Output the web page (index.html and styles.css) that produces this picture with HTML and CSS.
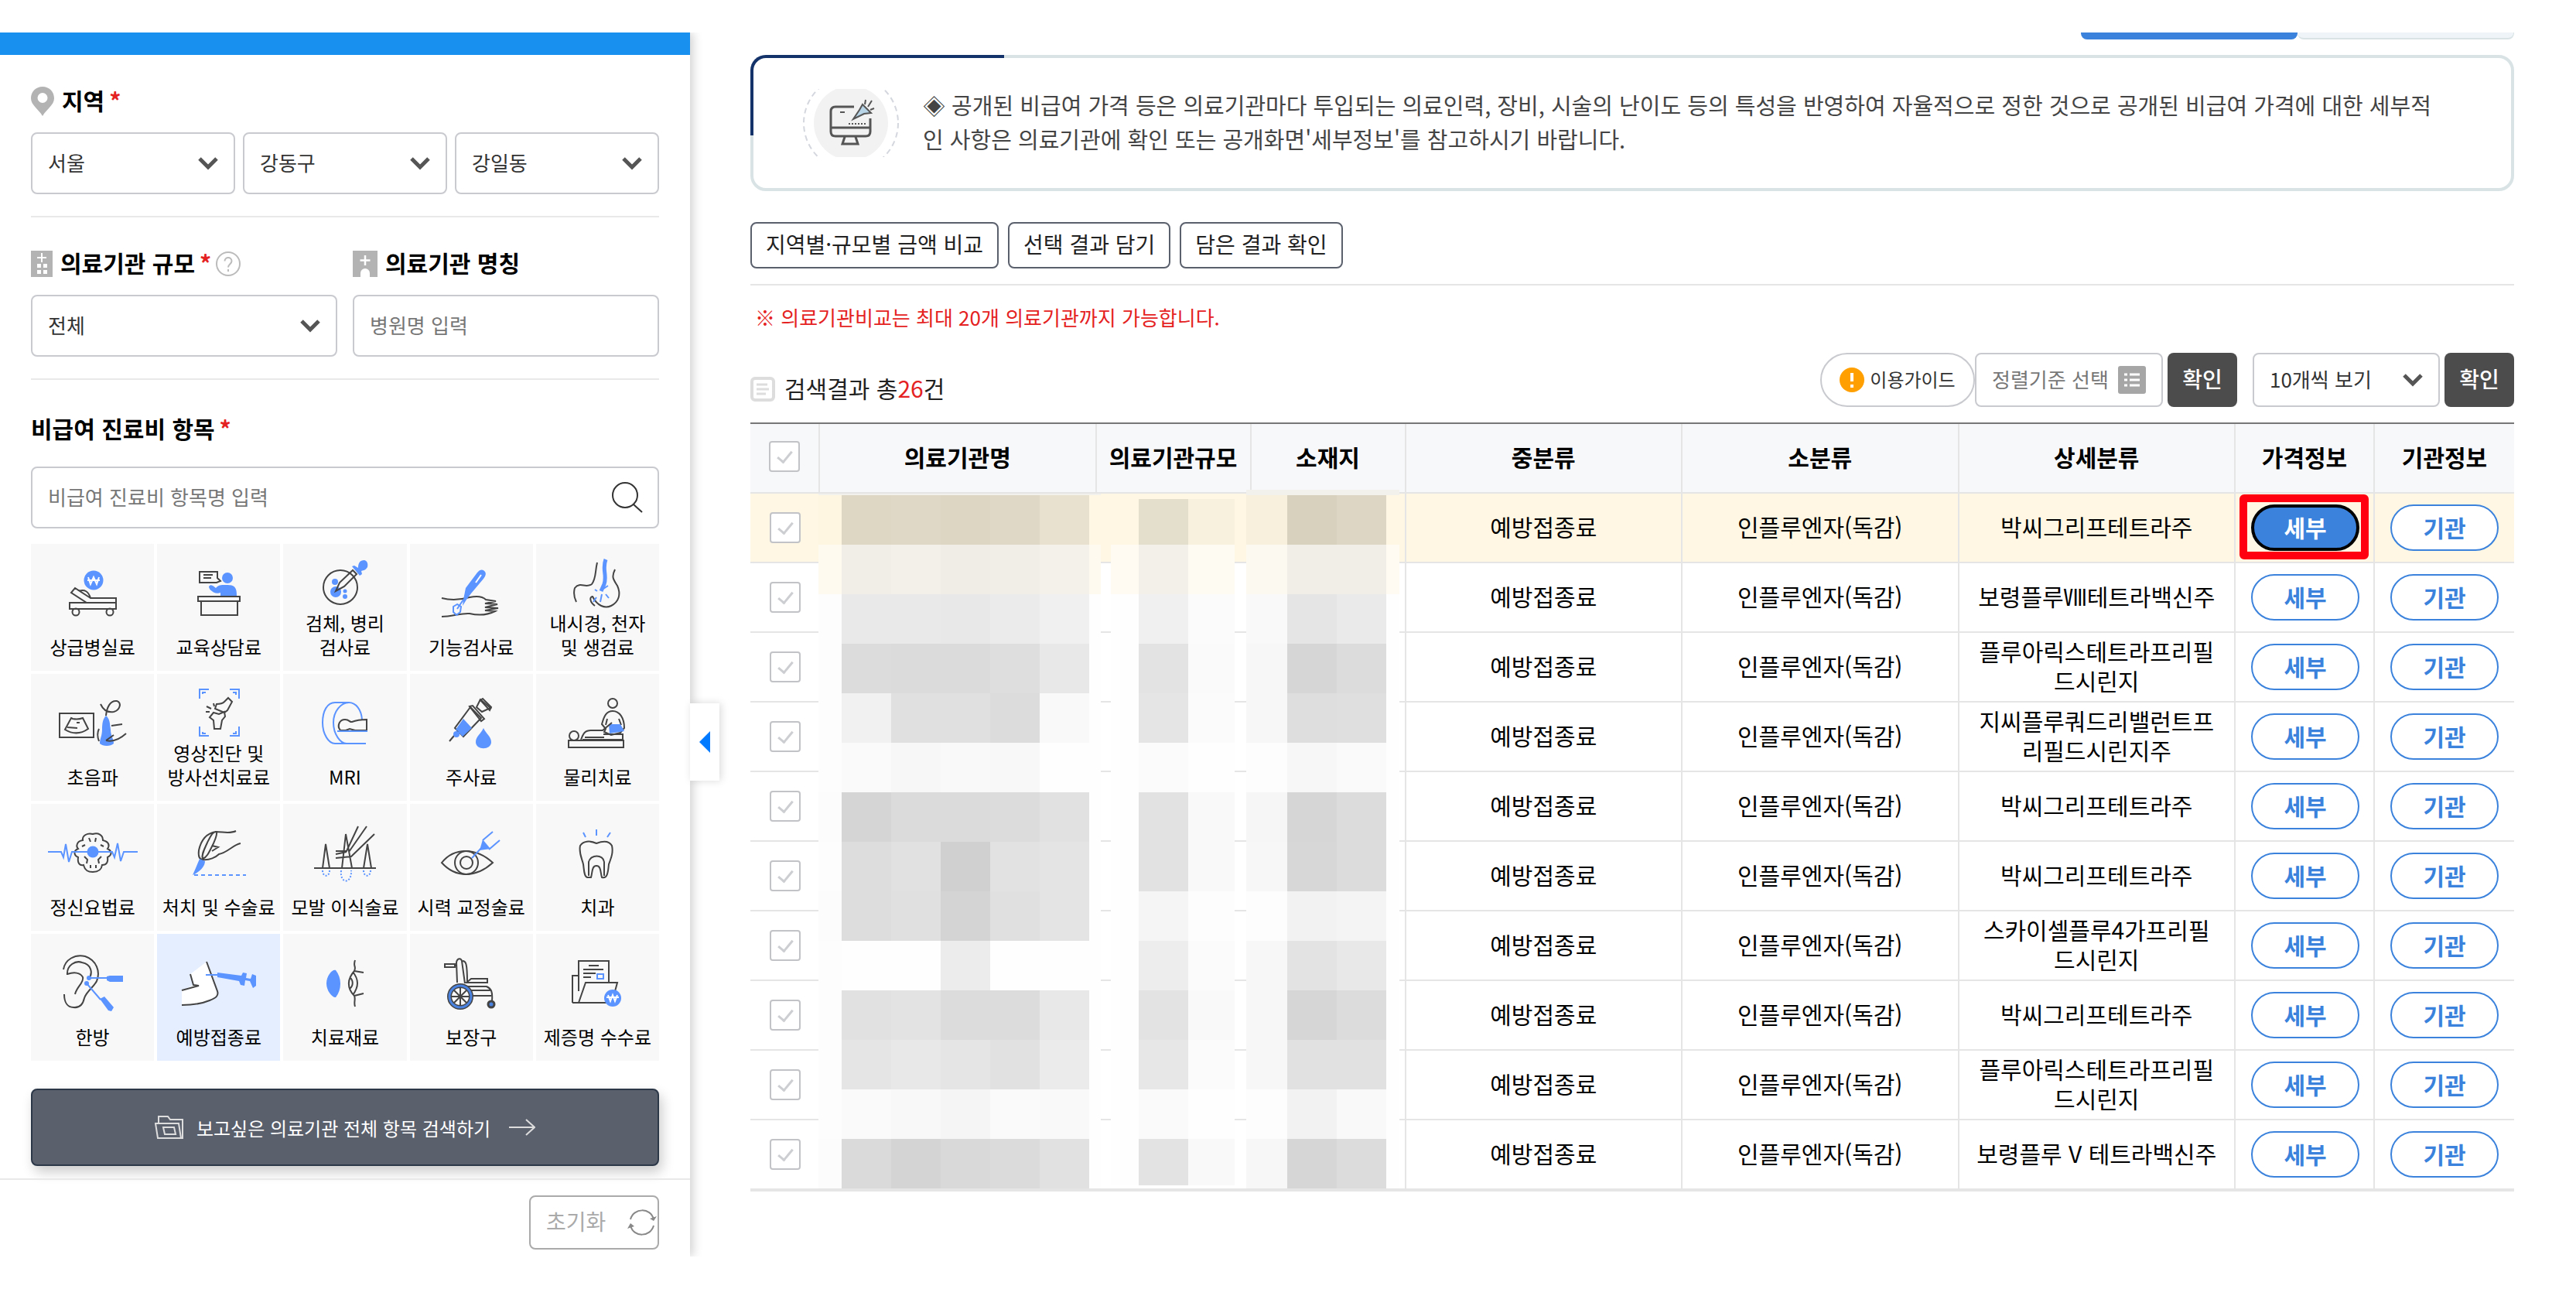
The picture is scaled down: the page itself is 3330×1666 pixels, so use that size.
FILE: index.html
```html
<!DOCTYPE html>
<html lang="ko">
<head>
  <meta charset="UTF-8">
  <title>비급여 진료비 정보</title>
  <link rel="stylesheet" href="styles.css">
</head>
<body>
<div class="page">

  <aside class="sidebar">
    <div class="sidebar-bar"></div>
    <form class="search">

      <section class="section line">
        <div class="label">
          <svg width="30" height="38" viewBox="0 0 30 38"><path d="M15 0C6.500 0 0 6.500 0 15c0 9 10 14 15 23 5-9 15-14 15-23C30 6.500 23.500 0 15 0zm0 8a6.500 6.500 0 1 1 0 13 6.500 6.500 0 0 1 0-13z" fill="#b3b3b3"/></svg>
          <label for="sido">지역</label><em>*</em>
        </div>
        <div class="fields three">
          <span class="select-box">
            <select id="sido"><option>서울</option></select>
            <svg class="chevron" viewBox="0 0 28 18"><path d="M3 3l11 11L25 3"/></svg>
          </span>
          <span class="select-box">
            <select aria-label="시군구"><option>강동구</option></select>
            <svg class="chevron" viewBox="0 0 28 18"><path d="M3 3l11 11L25 3"/></svg>
          </span>
          <span class="select-box">
            <select aria-label="읍면동"><option>강일동</option></select>
            <svg class="chevron" viewBox="0 0 28 18"><path d="M3 3l11 11L25 3"/></svg>
          </span>
        </div>
      </section>

      <section class="section line two">
        <div>
          <div class="label">
            <svg width="28" height="34" viewBox="0 0 28 34"><path d="M0 0h28v34H0z" fill="#b3b3b3"/><path d="M14 3v12M8 9h12" stroke="#fff" stroke-width="2"/><path d="M8 17h5v5H8zM16 17h5v5h-5zM8 25h5v5H8zM16 25h5v5h-5z" fill="#fff"/></svg>
            <label for="size">의료기관 규모</label><em>*</em>
            <svg width="32" height="32" viewBox="0 0 32 32" fill="none" stroke="#bbb" stroke-width="2"><circle cx="16" cy="16" r="15"/><path d="M11.500 12.500c0-6 9-6 9 0 0 3.500-4.500 4-4.500 8M16 23v3"/></svg>
          </div>
          <span class="select-box">
            <select id="size"><option>전체</option></select>
            <svg class="chevron" viewBox="0 0 28 18"><path d="M3 3l11 11L25 3"/></svg>
          </span>
        </div>
        <div>
          <div class="label">
            <svg width="32" height="34" viewBox="0 0 32 34"><path d="M0 0h32v34H22v-5a6 6 0 0 0-12 0v5H0z" fill="#b3b3b3"/><path d="M16 6v13M9.500 12.500h13" stroke="#fff" stroke-width="2.500"/></svg>
            <label for="name">의료기관 명칭</label>
          </div>
          <input class="text" id="name" type="text" placeholder="병원명 입력">
        </div>
      </section>

      <section class="section items">
        <div class="label"><label for="item">비급여 진료비 항목</label><em>*</em></div>
        <div class="select-box">
          <input class="text" id="item" type="text" placeholder="비급여 진료비 항목명 입력">
          <svg class="magnifier" viewBox="0 0 40 40"><circle cx="17" cy="17" r="16"/><path d="M28 29l11 10"/></svg>
        </div>

        <div class="tiles">
          <button type="button">
            <svg viewBox="0 0 160 84"><circle class="f" cx="81" cy="47" r="12.500"/><path class="w" d="M74 43l3 9 4-9 4 9 3-9M73 47h16"/><path class="s" d="M62 61q11-4 15 9h33v6H72L52 63l5-6 20 13M50 76h60v8H50z"/><circle class="s" cx="58" cy="88" r="4.500"/><circle class="s" cx="102" cy="88" r="4.500"/></svg>
            <span>상급병실료</span>
          </button>
          <button type="button">
            <svg viewBox="0 0 160 84"><path class="s" d="M55 36h23v8l4 4-5 2H55zM60 40h12M60 44h10"/><circle class="f" cx="91" cy="44" r="7"/><path class="f" d="M82 67V63c-6 3-15-3-15-8 3-4 6 0 9 2 3-4 7-4 12-4 11 0 15 1 15 14z"/><path class="s" d="M53 68h54v6H53zM57 74h47v18H57z"/></svg>
            <span>교육상담료</span>
          </button>
          <button type="button">
            <svg viewBox="0 0 160 84"><circle class="s" cx="74" cy="56" r="22"/><circle class="f" cx="67" cy="49" r="4"/><circle class="f" cx="68" cy="62" r="7"/><circle class="f" cx="80" cy="61" r="2.500"/><circle class="f" cx="80" cy="68" r="3"/><path class="s" d="M68 61l5-11 17-16 5 5-16 16z"/><path class="f" d="M89 29l3-1 5 3c0-6 2-10 8-10 4 1 5 5 4 9-3 5-6 4-8 5l1 4-3 2z"/></svg>
            <span>검체, 병리<br>검사료</span>
          </button>
          <button type="button">
            <svg viewBox="0 0 160 84"><path class="s" d="M42 70c12 3 25 2 36-1 10-2 17-1 21 3l13 2-14 3 16 1-16 4 17 1-17 3 13 1c-10 5-20 6-33 3-10-1-23 4-36 4"/><path class="f" d="M70 72l3-15 15-20c4-5 8-4 10-1 2 3 0 6-2 9L80 64l-6 8-5 8z"/><path class="w" d="M86 50l7-10"/><path class="b" d="M70 72l-8 12M62 78l-5 3v7l4 4 5-4 1-7z"/></svg>
            <span>기능검사료</span>
          </button>
          <button type="button">
            <svg viewBox="0 0 160 84"><path class="s" d="M80 24c-3 12-1 20-7 28-8 6-15-4-22 5-2 7-1 12 2 18M103 33c-5 10-2 13 3 21 5 11 2 21-8 26-8 4-18 0-24-12-4 0-4 7 3 12"/><path class="b thick" d="M91 20c-5 13 2 20-2 32l-4 9"/><path class="b" d="M80 61l-3-2M86 65l-2 10M79 69l-4 6M91 65l4 5M88 58l6-4"/></svg>
            <span>내시경, 천자<br>및 생검료</span>
          </button>

          <button type="button">
            <svg viewBox="0 0 160 84"><path class="s" d="M37 51h44v31H37zM52 57l2 1c5 1 8 1 13-1l7 14c-10 7-20 7-30 1zM47 69l13 1M59 63h4"/><path class="f" d="M97 54c5 4 5 10 6 18 0 8 4 12 4 18-4 4-14 4-18 0 0-6 3-10 3-18 0-8 1-14 5-18z"/><path class="s" d="M97 54c1-10 5-20 14-19 7 2 4 12-4 14-6 1-13-1-17-10M104 67l14-2M88 71c-3 6-2 11 0 16M97 86c8 2 16 0 26-9M97 86l10-7"/></svg>
            <span>초음파</span>
          </button>
          <button type="button">
            <svg viewBox="0 0 160 84"><path class="b" d="M55 32V20h12M59 26v-2h4M94 20h12v12M98 24h4v3M55 68v12h12M59 75v2h4M94 80h12V68M98 77h4v-3"/><path class="s" d="M92 31l5 5-6 11-4 3-12-5 2-6c5 0 8-1 10-3zM73 50l7 2 7-3 1 6-4 5-2 11h-8l-1-11-5-4zM64 42l6 3M73 38l1 4M63 49l5 0"/></svg>
            <span>영상진단 및<br>방사선치료료</span>
          </button>
          <button type="button">
            <svg viewBox="0 0 160 84"><path class="b" d="M102 59c-1-13-8-22-17-22H67C57 37 51 48 51 63s8 27 16 27h40M85 37C75 37 65 48 65 63s9 27 17 27"/><path class="s" d="M74 73c-5-6-1-14 6-14 6 0 6 4 9 3 5-2 10-3 19-3v14H93l-7-2-5 2z"/><path class="b" d="M70 74h39"/></svg>
            <span>MRI</span>
          </button>
          <button type="button">
            <svg viewBox="0 0 160 84"><path class="s" d="M92 33l-5 10 7 6 11-5zM79 43l14 14-23 24-11-11z"/><path class="f" d="M70 58l11 12-12 11-9-9z"/><path class="s" d="M78 42l4-1 15 17-4 3zM92 34l3-2 11 11-2 4zM63 74l-11 13"/><circle class="f" cx="61" cy="78" r="4"/><path class="f" d="M96 70c3 7 10 11 10 18 0 11-20 11-20 0 0-7 7-11 10-18z"/></svg>
            <span>주사료</span>
          </button>
          <button type="button">
            <svg viewBox="0 0 160 84"><circle class="s" cx="100" cy="38" r="6"/><path class="s" d="M100 48c-8 0-11 6-14 17l5 6-2 4 9 4 12-3 5-6c0-13-6-22-15-22zM93 58l-2 8M108 58l3 8"/><path class="f" d="M95 65h15l5 9-19 3z"/><circle class="s" cx="50" cy="80" r="6"/><path class="s" d="M59 85c3-8 5-12 13-12h15l12-10M88 78h25v7H61M43 86h71v9H43zM64 82h25"/></svg>
            <span>물리치료</span>
          </button>

          <button type="button">
            <svg viewBox="0 0 160 84"><path class="s" d="M80 39c-7-2-14 2-13 8-8 1-9 8-6 11-7 3-5 9 0 11-1 8 2 11 7 10 2 8 7 9 12 9s11-1 12-9c6 0 8-4 7-10 6-3 6-8 0-11 3-4 2-9-6-11 0-7-6-10-13-8zM75 44l2 5M84 44l-1 5M70 53l-4 2M90 53l4 2M69 68l4 4-1 5M91 68l-4 4 1 5M77 79v4M84 79v4"/><path class="b" d="M22 62h17l3 7 3-17 4 23 4-13h52l3 7 4-18 4 23 4-12h18"/><circle class="f" cx="80" cy="62" r="7.500"/></svg>
            <span>정신요법료</span>
          </button>
          <button type="button">
            <svg viewBox="0 0 160 84"><path class="s" d="M102 35c-8 4-17 1-26 1-12 2-19 10-22 24-1 8 1 12 5 12 9 1 17-3 21-7 11-2 18-12 28-14M77 36c-5-1-8 6-12 14-4 9-8 16-6 21 6-2 9-10 14-20 3-7 5-11 4-15zM71 54l8 2-8 5"/><path class="f" d="M55 71l7 3c0 7-7 14-16 18l4-9z"/><path class="b" stroke-dasharray="5 4" d="M48 92h67"/></svg>
            <span>처치 및 수술료</span>
          </button>
          <button type="button">
            <svg viewBox="0 0 160 84"><path class="s" d="M51 83l4-31 5 31M76 83l5-44 8 44M104 83l5-31 5 31M97 29L82 61l-14 0M108 29L85 62M118 39L88 68l-20 2M68 65l14-3"/><path class="s" d="M40 83h80"/><path class="b" stroke-dasharray="2 2" d="M51 86c0 9 9 9 9 0M75 86c-2 18 14 18 13 0M104 86c0 9 9 9 9 0"/></svg>
            <span>모발 이식술료</span>
          </button>
          <button type="button">
            <svg viewBox="0 0 160 84"><path class="s" d="M42 76c16-20 44-20 66 0-22 20-48 20-66 0z"/><circle class="s" cx="74" cy="76" r="15"/><circle class="s" cx="74" cy="76" r="8"/><path class="b" d="M81 70l15-16M95 47l13-11M103 59l14-12"/><path class="f" d="M95 46l10 12-14 2z"/></svg>
            <span>시력 교정술료</span>
          </button>
          <button type="button">
            <svg viewBox="0 0 160 84"><path class="s" d="M79 51c-9-4-17-3-21 3-2 9 2 16 4 24 1 7 1 16 5 17h5c2-7 1-15 7-15s5 8 7 15c7 2 8-6 9-17 3-8 6-15 4-24-4-7-12-6-20-3zM69 93V75c2-10 19-10 20 0v18"/><path class="b" d="M62 37l3 6M79 33v8M97 37l-4 6"/></svg>
            <span>치과</span>
          </button>

          <button type="button">
            <svg viewBox="0 0 160 84"><path class="s" d="M42 46c2-13 15-20 28-17 15 5 20 20 15 32-4 8-13 13-16 22-2 9-6 13-14 12-8 0-12-7-12-17M47 53c-1-13 11-19 19-16 12 2 15 14 8 22M47 52c9-3 17-2 20 4 2 7-8 12-10 22"/><circle class="f" cx="75" cy="57" r="3"/><circle class="f" cx="72" cy="64" r="3"/><path class="b" d="M75 57h24M72 64l18 21"/><path class="f" d="M98 55l4-1h17v8h-17l-4-2zM89 84l6-3 12 14-3 5-4-1z"/></svg>
            <span>한방</span>
          </button>
          <button type="button" class="on">
            <svg viewBox="0 0 160 84"><path fill="#fff" d="M64 36L43 52l5 14-16 7v19c18 0 34-4 46-13z"/><path class="s" d="M64 36l14 38c2 6-2 9-10 12-12 5-22 6-36 6M43 52l4 14 7 1-22 6"/><path class="b" d="M63 53h18"/><path class="f" d="M78 50l31 4 2-4 5 1-1 6 6 1 2-6 5 2v13l-4 3-4-9-6-1-1 7-5-1-2-5-28-5z"/></svg>
            <span>예방접종료</span>
          </button>
          <button type="button">
            <svg viewBox="0 0 160 84"><path class="f" d="M68 47c8 10 8 25 0 35-4 1-12-8-12-18s8-19 12-17z"/><path class="s" d="M93 34c-3 8 2 8-1 14-9 10-10 22 0 32 2 5-1 8 1 14M90 49c8 10 8 19 0 30M86 56c5 4 5 11 0 15M92 48l12 2M92 80l12-3"/></svg>
            <span>치료재료</span>
          </button>
          <button type="button">
            <svg viewBox="0 0 160 84"><path class="s" d="M62 63l-1-26c1-6 6-6 7-2l4 29M69 35c4 0 6 2 6 28M46 39h13v4H46zM59 41h3M74 63h27v-5H80zM74 68h26c6 3 8 6 7 19M80 73h25M82 80h24"/><circle cx="66" cy="81" r="14" fill="#f8f8f8" stroke="#444" stroke-width="6"/><circle cx="66" cy="81" r="14" fill="none" stroke="#4a82e0" stroke-width="3"/><path class="s" d="M66 69v24M54 81h24M58 73l16 16M74 73L58 89"/><circle cx="106" cy="91" r="4" fill="#4a82e0" stroke="#444" stroke-width="3"/></svg>
            <span>보장구</span>
          </button>
          <button type="button">
            <svg viewBox="0 0 160 84"><path class="s" d="M48 89V54h8V35h39v27M56 54v20M69 41h13M62 46h26M62 51h16M62 56h10M56 89l9-26h41l-7 26H48z"/><path class="b" d="M80 52h8v6h-8z"/><circle class="f" cx="100" cy="83" r="11"/><path class="w" d="M94 79l3 8 3-8 3 8 3-8M92 82h16"/></svg>
            <span>제증명 수수료</span>
          </button>
        </div>

        <button type="button" class="full-search">
          <svg width="38" height="30" viewBox="0 0 38 30"><path d="M5 10V1h12l3 4h16v24H4L1 10h30l3 19M11 15h14l2 9H13z"/></svg>
          <span>보고싶은 의료기관 전체 항목 검색하기</span>
          <svg width="34" height="22" viewBox="0 0 34 22"><path d="M0 11h33M22 1l11 10-11 10"/></svg>
        </button>
      </section>

      <div class="sidebar-foot">
        <button type="reset" class="reset"><span>초기화</span>
          <svg width="38" height="34" viewBox="0 0 38 34"><path d="M4 13C8-2 30-3 34 13M34 21C30 36 8 37 4 21"/><path d="M29 12l5 3 4-6zM9 22l-5-4-4 7z" fill="#888" stroke="none"/></svg>
        </button>
      </div>
    </form>
    <button type="button" class="fold" aria-label="접기"><svg width="14" height="28" viewBox="0 0 14 28"><path d="M14 0v28L0 14z" fill="#007bff"/></svg></button>
  </aside>

  <main class="content">
    <div class="tabs"><span class="on"></span><span></span></div>

    <div class="notice">
      <svg width="124" height="88" viewBox="0 0 124 88" fill="none">
        <circle cx="62" cy="44" r="48" fill="#f2f2f2"/>
        <circle cx="62" cy="44" r="61" stroke="#d5d7df" stroke-width="2" stroke-dasharray="7 5"/>
        <g stroke="#555" stroke-width="3"><path d="M66 23H42q-6 0-6 6v26q0 6 6 6h39q6 0 6-6V38M36 50h51M54 62l-3 9h20l-3-9"/><path stroke-width="2" stroke-dasharray="2 2" d="M59 45h22"/><path stroke-width="2" d="M77 20l11 11-9 1-14 7 8-12z" fill="#b7d3e6"/><path stroke-width="2" d="M48 30h6M80 20l1-6M84 23l5-8M87 27l5-2"/></g>
      </svg>
      <p>◈ 공개된 비급여 가격 등은 의료기관마다 투입되는 의료인력, 장비, 시술의 난이도 등의 특성을 반영하여 자율적으로 정한 것으로 공개된 비급여 가격에 대한 세부적인 사항은 의료기관에 확인 또는 공개화면'세부정보'를 참고하시기 바랍니다.</p>
    </div>

    <div class="actions">
      <button type="button">지역별·규모별 금액 비교</button>
      <button type="button">선택 결과 담기</button>
      <button type="button">담은 결과 확인</button>
    </div>
    <p class="warn">※ 의료기관비교는 최대 20개 의료기관까지 가능합니다.</p>

    <div class="toolbar">
      <p class="count">
        <svg width="32" height="32" viewBox="0 0 32 32" fill="none" stroke="#ddd" stroke-width="4"><rect x="2" y="2" width="28" height="28" rx="4"/><path d="M8 10h14M8 16h16M8 22h12" stroke-width="3"/></svg>
        <span>검색결과 총<b>26</b>건</span>
      </p>
      <button type="button" class="guide">
        <svg width="32" height="32" viewBox="0 0 32 32"><circle cx="16" cy="16" r="16" fill="#ffa000"/><path d="M16 7v11M16 22v4" stroke="#fff" stroke-width="4"/></svg><span>이용가이드</span>
      </button>
      <button type="button" class="sort"><span>정렬기준 선택</span>
        <svg width="36" height="36" viewBox="0 0 36 36"><rect width="36" height="36" rx="3" fill="#a6a6a6"/><path d="M8 11h4M15 11h13M8 18h4M15 18h13M8 25h4M15 25h13" stroke="#fff" stroke-width="3"/></svg>
      </button>
      <button type="button" class="ok">확인</button>
      <span class="select-box per-page">
        <select aria-label="목록 개수"><option>10개씩 보기</option></select>
        <svg class="chevron" viewBox="0 0 28 18"><path d="M3 3l11 11L25 3"/></svg>
      </span>
      <button type="button" class="ok">확인</button>
    </div>

    <div class="result">
      <table>
        <colgroup>
          <col class="c-check"><col class="c-wide"><col class="c-mid"><col class="c-mid">
          <col class="c-wide"><col class="c-wide"><col class="c-wide"><col class="c-btn"><col class="c-btn">
        </colgroup>
        <thead>
          <tr>
            <th><input type="checkbox" aria-label="전체 선택"></th>
            <th>의료기관명</th>
            <th>의료기관규모</th>
            <th>소재지</th>
            <th>중분류</th>
            <th>소분류</th>
            <th>상세분류</th>
            <th>가격정보</th>
            <th>기관정보</th>
          </tr>
        </thead>
        <tbody id="rows"></tbody>
      </table>
      <svg class="mask" id="mask" viewBox="0 0 2280 994" preserveAspectRatio="none" shape-rendering="crispEdges"></svg>
    </div>
  </main>

</div>
<script src="script.js"></script>
</body>
</html>
```
FILE: styles.css
```css
*, *::before, *::after {
  box-sizing: border-box;
}
body {
  margin: 0;
  background: #fff;
  color: #000;
  font-family: "Noto Sans CJK KR", "Noto Sans", sans-serif;
  font-size: 26px;
}
p {
  margin: 0;
}
button, input, select {
  margin: 0;
  font: inherit;
  color: inherit;
}
button {
  padding: 0;
  border: 0;
  background: none;
  cursor: pointer;
}
svg {
  flex: none;
}
.page {
  display: flex;
  align-items: flex-start;
  padding-top: 42px;
}

/* sidebar */
.sidebar {
  position: relative;
  flex: none;
  width: 892px;
  background: #fff;
  box-shadow: 4px 0 12px rgba(0,0,0,0.18);
  clip-path: inset(0 -60px 0 0);
}
.sidebar-bar {
  height: 29px;
  background: #1890f0;
}
.section {
  margin: 0 40px;
  padding: 40px 0 28px;
}
.section.line {
  border-bottom: 2px solid #e9e9e9;
}
.section.items {
  padding: 44px 0 16px;
}
.two {
  display: grid;
  grid-template-columns: 1fr 1fr;
  gap: 20px;
}
.label {
  display: flex;
  align-items: center;
  gap: 10px;
  height: 40px;
  margin-bottom: 20px;
  font-size: 30px;
  font-weight: bold;
  line-height: 40px;
}
.items .label {
  margin-bottom: 28px;
}
.label label, .label em {
  padding-bottom: 4px;
}
.label em {
  margin: 0 -4px;
  color: #e52222;
  font-style: normal;
}
.fields {
  display: flex;
  gap: 10px;
}
.select-box {
  position: relative;
  display: block;
  flex: 1;
}
select, .text {
  display: block;
  width: 100%;
  height: 80px;
  padding: 0 20px 4px;
  border: 2px solid #c9cacf;
  border-radius: 8px;
  background: #fff;
  color: #333;
  appearance: none;
}
.text::placeholder {
  color: #777;
}
.chevron {
  position: absolute;
  right: 21px;
  top: 50%;
  width: 28px;
  height: 18px;
  margin-top: -9px;
  fill: none;
  stroke: #555;
  stroke-width: 5;
  pointer-events: none;
}
.magnifier {
  position: absolute;
  right: 21px;
  top: 20px;
  width: 40px;
  height: 40px;
  fill: none;
  stroke: #333;
  stroke-width: 2;
}

.tiles {
  display: grid;
  grid-template-columns: repeat(5, minmax(0, 1fr));
  gap: 4px;
  margin-top: 20px;
}
.tiles button {
  display: flex;
  flex-direction: column;
  align-items: center;
  justify-content: space-between;
  height: 164px;
  padding-bottom: 16px;
  background: #f8f8f8;
  font-size: 24px;
  line-height: 31px;
  white-space: nowrap;
}
.tiles .on {
  background: #e5eeff;
}
.tiles svg {
  width: 160px;
  height: 84px;
  overflow: visible;
}
.s {
  fill: none;
  stroke: #444;
  stroke-width: 2;
}
.b {
  fill: none;
  stroke: #5b93ff;
  stroke-width: 2;
}
.thick {
  stroke-width: 5;
}
.f {
  fill: #5b93ff;
}
.w {
  fill: none;
  stroke: #fff;
  stroke-width: 2;
}

.full-search {
  display: flex;
  align-items: center;
  justify-content: center;
  width: 100%;
  height: 100px;
  margin-top: 36px;
  border: 2px solid #2c3748;
  border-radius: 8px;
  background: #5b606d;
  box-shadow: 4px 8px 16px rgba(0,0,0,0.2);
  color: #fff;
  font-size: 24px;
}
.full-search span {
  margin: 0 24px 0 16px;
}
.full-search svg {
  fill: none;
  stroke: #ddd;
  stroke-width: 2;
}
.sidebar-foot {
  display: flex;
  justify-content: flex-end;
  padding: 20px 40px 9px;
  border-top: 2px solid #e9e9e9;
}
.reset {
  display: flex;
  align-items: center;
  justify-content: space-between;
  width: 168px;
  height: 70px;
  padding: 0 1px 0 20px;
  border: 2px solid #aaa;
  border-radius: 8px;
  color: #aaa;
  font-size: 28px;
}
.reset span {
  padding-bottom: 4px;
}
.reset svg {
  fill: none;
  stroke: #888;
  stroke-width: 2;
}
.fold {
  position: absolute;
  left: 100%;
  top: 867px;
  display: flex;
  align-items: center;
  justify-content: center;
  width: 38px;
  height: 100px;
  background: #fff;
  box-shadow: 2px 0 10px rgba(0,0,0,0.15);
}

/* content */
.content {
  flex: 1;
  min-width: 0;
  padding: 0 80px 0 78px;
}
.tabs {
  display: flex;
  justify-content: flex-end;
  height: 9px;
  margin-bottom: 20px;
}
.tabs span {
  width: 280px;
  border: 2px solid #d9e3e6;
  border-width: 0 1px 2px 0;
  border-radius: 0 0 8px 8px;
  background: #eff4f8;
}
.tabs .on {
  border: 0;
  background: #3a82dc;
}
.notice {
  position: relative;
  display: flex;
  align-items: center;
  gap: 31px;
  height: 176px;
  padding: 0 90px 0 64px;
  border: 4px solid #d9e3e6;
  border-radius: 20px;
}
.notice::before {
  content: "";
  position: absolute;
  left: -4px;
  top: -4px;
  width: 328px;
  height: 104px;
  border: solid #14336a;
  border-width: 4px 0 0 4px;
  border-radius: 20px 0 0 0;
}
.notice p {
  padding-bottom: 4px;
  color: #444;
  font-size: 29px;
  line-height: 44px;
  word-break: break-all;
}
.actions {
  display: flex;
  gap: 12px;
  margin-top: 40px;
  padding-bottom: 20px;
  border-bottom: 2px solid #e5e5e5;
}
.actions button {
  height: 60px;
  padding: 0 18px 4px;
  border: 2px solid #5b606d;
  border-radius: 8px;
  color: #222;
  font-size: 28px;
}
.warn {
  margin: 20px 0 26px 6px;
  color: #e52222;
  line-height: 41px;
}
.toolbar {
  display: flex;
  height: 70px;
  margin-bottom: 20px;
}
.count {
  display: flex;
  align-items: center;
  align-self: flex-end;
  gap: 12px;
  height: 46px;
  margin-right: auto;
  color: #222;
  font-size: 30px;
}
.count span {
  padding-bottom: 4px;
}
.count b {
  color: #e52222;
  font-weight: normal;
}
.guide {
  display: flex;
  align-items: center;
  justify-content: center;
  gap: 7px;
  width: 200px;
  border: 2px solid #c9cacf;
  border-radius: 35px;
  color: #333;
  font-size: 24px;
}
.sort {
  display: flex;
  align-items: center;
  justify-content: space-between;
  width: 243px;
  padding: 0 20px;
  border: 2px solid #c9cacf;
  border-radius: 8px;
  color: #777;
}
.guide span, .sort span {
  padding-bottom: 4px;
}
.ok {
  width: 90px;
  margin-left: 6px;
  padding-bottom: 4px;
  border-radius: 8px;
  background: #4c4c4c;
  color: #fff;
  font-size: 28px;
  font-weight: 500;
}
.per-page {
  flex: none;
  width: 242px;
  margin-left: 20px;
}
.per-page select {
  height: 70px;
}

/* result table */
.result {
  position: relative;
}
table {
  width: 100%;
  border-top: 2px solid #777;
  border-bottom: 2px solid #e5e5e5;
  border-spacing: 0;
  table-layout: fixed;
  font-size: 30px;
  line-height: 38px;
}
.c-check { width: 90px; }
.c-mid { width: 200px; }
.c-btn { width: 180px; }
th, td {
  height: 90px;
  padding: 0 20px 4px;
  border-right: 2px solid #e5e5e5;
  border-bottom: 2px solid #e5e5e5;
  text-align: center;
  vertical-align: middle;
  word-break: break-all;
}
th:last-child, td:last-child {
  border-right: 0;
}
th {
  background: #f7f8fa;
}
th:nth-child(3) {
  padding: 0 0 4px;
}
td:first-child {
  padding-bottom: 0;
  border-right: 0;
}
td:nth-child(n+8) {
  padding-bottom: 0;
}
.picked td {
  background: #fff7e3;
}
input[type="checkbox"] {
  position: relative;
  display: block;
  width: 40px;
  height: 40px;
  margin: 0 auto;
  border: 2px solid #c2c3c6;
  border-radius: 4px;
  background: #fff;
  appearance: none;
}
input[type="checkbox"]::after {
  content: "";
  position: absolute;
  left: 13px;
  top: 7px;
  width: 11px;
  height: 19px;
  border: solid #ccced1;
  border-width: 0 3px 3px 0;
  transform: rotate(40deg);
}
.pill {
  display: block;
  width: 140px;
  height: 60px;
  padding-bottom: 3px;
  border: 2px solid #3a82dc;
  border-radius: 30px;
  background: #fff;
  color: #3a82dc;
  font-weight: bold;
}
.pill-box {
  position: relative;
  display: block;
  width: 140px;
  margin: 0 auto;
}
.picked .focus .pill {
  border: 4px solid #000;
  background: #3a82dc;
  color: #fff;
}
/* red frame round the opened row's button */
.picked .focus::after {
  content: "";
  position: absolute;
  inset: -13px -12px -11px -15px;
  border: 10px solid #ff0010;
  border-radius: 6px;
}
.mask {
  position: absolute;
  left: 0;
  top: 0;
  width: 100%;
  height: 100%;
  pointer-events: none;
}
```
FILE: script.js
```js
const products = [
  "박씨그리프테트라주",
  "보령플루Ⅷ테트라백신주",
  "플루아릭스테트라프리필드시린지",
  "지씨플루쿼드리밸런트프리필드시린지주",
  "박씨그리프테트라주",
  "박씨그리프테트라주",
  "스카이셀플루4가프리필드시린지",
  "박씨그리프테트라주",
  "플루아릭스테트라프리필드시린지",
  "보령플루 V 테트라백신주"
];

document.getElementById("rows").innerHTML = products.map((name, i) => `
  <tr class="${i === 0 ? "picked" : ""}">
    <td><input type="checkbox" aria-label="${name} 선택"></td>
    <td></td><td></td><td></td>
    <td>예방접종료</td>
    <td>인플루엔자(독감)</td>
    <td>${name}</td>
    <td><span class="pill-box ${i === 0 ? "focus" : ""}"><button type="button" class="pill">세부</button></span></td>
    <td><span class="pill-box"><button type="button" class="pill">기관</button></span></td>
  </tr>`).join("");

// hidden hospital columns: x edges, then one line of colours per 64px step
const masks = [
  { x: [88, 118, 182, 246, 310, 374, 438, 453], top: 94, end: 990, rows: [
    "fff6e2 ddd7c4 dfd8c6 ddd6c3 dfd8c6 e8e1cf fff7e3",
    "fffaf0 f0eee7 f3f0e9 efede5 f0eee7 f4f1ea fffaf0",
    "fdfdfd e9e9e9 e9e9e9 e8e8e8 ebebeb f0f0f0 fefefe",
    "fdfdfd dcdcdc dbdbdb dbdbdb dedede e8e8e8 fefefe",
    "fdfdfd f1f1f1 e0e0e0 e0e0e0 dcdcdc f9f9f9 fefefe",
    "fdfdfd fafafa f7f7f7 f9f9f9 f8f8f8 fefefe fefefe",
    "fcfcfc d5d5d5 dbdbdb dbdbdb dcdcdc e1e1e1 fefefe",
    "fdfdfd dddddd e1e1e1 d0d0d0 e2e2e2 e4e4e4 fefefe",
    "fcfcfc dddddd e0e0e0 d4d4d4 e0e0e0 e4e4e4 fefefe",
    "fdfdfd fefefe fefefe ececec fefefe fefefe fefefe",
    "fdfdfd e1e1e1 e3e3e3 dcdcdc dcdcdc e8e8e8 fefefe",
    "fdfdfd e5e5e5 e8e8e8 e5e5e5 e1e1e1 ebebeb fefefe",
    "fdfdfd fafafa f8f8f8 f5f5f5 fafafa f9f9f9 fefefe",
    "fcfcfc dadada d4d4d4 d9d9d9 dbdbdb e1e1e1 fefefe"] },
  { x: [466, 502, 566, 626], top: 99, end: 986, rows: [
    "fff7e3 e4decc f8f1de", "fffbf3 f3f0ea fefbf3", "fefefe f0f0f0 fbfbfb", "fefefe e3e3e3 fafafa",
    "fefefe e5e5e5 fbfbfb", "fefefe fbfbfb fefefe", "fefefe e2e2e2 f9f9f9", "fefefe e2e2e2 f9f9f9",
    "fefefe f5f5f5 fdfdfd", "fefefe ededed fbfbfb", "fefefe e3e3e3 f9f9f9", "fefefe e7e7e7 fbfbfb",
    "fefefe fafafa fefefe", "fefefe e3e3e3 f9f9f9"] },
  { x: [641, 694, 758, 822, 839], top: 94, end: 990, rows: [
    "f8f0dc d8d1be ddd6c4 fff7e3", "fcf9f1 f0eee6 f0eee6 fffbf2", "f9f9f9 e5e5e5 eaeaea fefefe",
    "f7f7f7 d6d6d6 dcdcdc fefefe", "f7f7f7 dedede dfdfdf fefefe", "fdfdfd f7f7f7 fafafa fefefe",
    "f6f6f6 d6d6d6 dcdcdc fefefe", "f7f7f7 d7d7d7 dcdcdc fefefe", "fdfdfd f2f2f2 f4f4f4 fefefe",
    "f7f7f7 e3e3e3 e8e8e8 fefefe", "f7f7f7 d6d6d6 dcdcdc fefefe", "f7f7f7 e1e1e1 e1e1e1 fefefe",
    "fdfdfd f2f2f2 f9f9f9 fefefe", "f7f7f7 d6d6d6 dcdcdc fefefe"] }
];

let rects = '<rect x="641" y="87" width="198" height="7" fill="#f3f1ec"/><rect x="88" y="92" width="365" height="2" fill="#f3f1ec"/>';
masks.forEach(m => m.rows.forEach((row, r) => {
  const y = Math.max(94 + r * 64, m.top);
  const bottom = Math.min(94 + (r + 1) * 64, m.end);
  row.split(" ").forEach((c, i) => {
    rects += `<rect x="${m.x[i]}" y="${y}" width="${m.x[i + 1] - m.x[i]}" height="${bottom - y}" fill="#${c}"/>`;
  });
}));
document.getElementById("mask").innerHTML = rects;
```
